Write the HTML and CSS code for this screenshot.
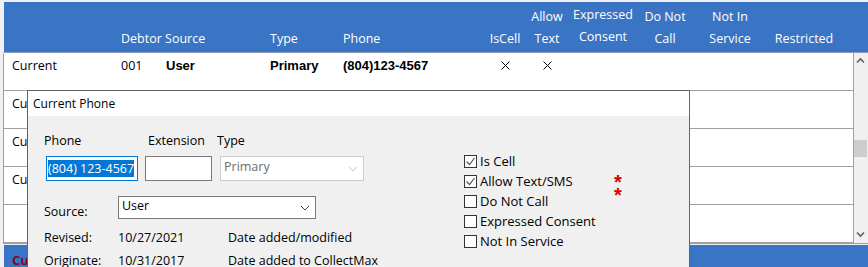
FILE: index.html
```html
<!DOCTYPE html>
<html lang="en">
<head>
    <meta charset="UTF-8">
    <meta name="viewport" content="width=device-width, initial-scale=1.0">
    <title>Phones</title>
    <link rel="stylesheet" href="styles.css">
</head>
<body>
    <div class="screen">
        <div class="grid">
            <div class="grid-head cols">
                <div class="hc"></div>
                <div class="hc">Debtor Source</div>
                <div class="hc"></div>
                <div class="hc">Type</div>
                <div class="hc">Phone</div>
                <div class="hc center">IsCell</div>
                <div class="hc center">Allow<br>Text</div>
                <div class="hc center consent">Expressed<br>Consent</div>
                <div class="hc center">Do Not<br>Call</div>
                <div class="hc center">Not In<br>Service</div>
                <div class="hc center">Restricted</div>
            </div>
            <div class="grid-main">
                <div class="grid-rows">
                    <div class="row cols">
                        <div class="cell name">Current</div>
                        <div class="cell">001</div>
                        <div class="cell bold">User</div>
                        <div class="cell bold">Primary</div>
                        <div class="cell bold">(804)123-4567</div>
                        <div class="cell center">
                            <svg class="mark" width="9" height="9" viewBox="0 0 9 9"><path d="M0.5 0.5 L8.5 8.5 M8.5 0.5 L0.5 8.5" stroke="#000" stroke-width="1"/></svg>
                        </div>
                        <div class="cell center">
                            <svg class="mark" width="9" height="9" viewBox="0 0 9 9"><path d="M0.5 0.5 L8.5 8.5 M8.5 0.5 L0.5 8.5" stroke="#000" stroke-width="1"/></svg>
                        </div>
                    </div>
                    <div class="row cols"><div class="cell name">Cu</div></div>
                    <div class="row cols"><div class="cell name">Cu</div></div>
                    <div class="row cols"><div class="cell name">Cu</div></div>
                    <div class="row cols"></div>
                </div>
                <div class="scrollbar">
                    <svg class="arrow" width="13" height="10" viewBox="0 0 13 10"><path d="M3 6.5 L6.5 3 L10 6.5" fill="none" stroke="#606060" stroke-width="1.6"/></svg>
                    <div class="thumb"></div>
                    <svg class="arrow down" width="13" height="10" viewBox="0 0 13 10"><path d="M3 3.5 L6.5 7 L10 3.5" fill="none" stroke="#606060" stroke-width="1.6"/></svg>
                </div>
            </div>
            <div class="grid-foot"><span>Cu</span></div>
        </div>

        <div class="dialog">
            <div class="dialog-title">Current Phone</div>
            <div class="dialog-body">
                <div class="form-left">
                    <div class="phone-grid">
                        <label class="lbl">Phone</label>
                        <label class="lbl ext">Extension</label>
                        <label class="lbl">Type</label>
                        <div class="input focused"><span class="sel">(804) 123-4567</span></div>
                        <div class="input"></div>
                        <div class="combo disabled">
                            <span>Primary</span>
                            <svg width="10" height="6" viewBox="0 0 10 6"><path d="M1 1 L5 5 L9 1" fill="none" stroke="#c4c4c4" stroke-width="1"/></svg>
                        </div>
                    </div>
                    <div class="source-row">
                        <span class="key">Source:</span>
                        <div class="combo source">
                            <span>User</span>
                            <svg width="10" height="6" viewBox="0 0 10 6"><path d="M1 1 L5 5 L9 1" fill="none" stroke="#444" stroke-width="1"/></svg>
                        </div>
                    </div>
                    <div class="info-row">
                        <span class="key">Revised:</span>
                        <span class="val">10/27/2021</span>
                        <span>Date added/modified</span>
                    </div>
                    <div class="info-row">
                        <span class="key">Originate:</span>
                        <span class="val">10/31/2017</span>
                        <span>Date added to CollectMax</span>
                    </div>
                </div>
                <div class="flags">
                    <div class="check">
                        <span class="box"><svg width="11" height="11" viewBox="0 0 11 11"><path d="M1.5 5.5 L4.5 8.5 L9.5 2" fill="none" stroke="#555" stroke-width="1.2"/></svg></span>
                        Is Cell
                    </div>
                    <div class="check">
                        <span class="box"><svg width="11" height="11" viewBox="0 0 11 11"><path d="M1.5 5.5 L4.5 8.5 L9.5 2" fill="none" stroke="#555" stroke-width="1.2"/></svg></span>
                        Allow Text/SMS
                    </div>
                    <div class="check"><span class="box"></span>Do Not Call</div>
                    <div class="check"><span class="box"></span>Expressed Consent</div>
                    <div class="check"><span class="box"></span>Not In Service</div>
                </div>
                <div class="stars">*<br>*</div>
            </div>
        </div>
    </div>
</body>
</html>
```

FILE: styles.css
```css
body {
    margin: 0;
    padding: 0;
    background-color: #F0F0F0;
    font-family: "Open Sans", Arial, sans-serif;
    font-size: 12px;
    color: #000000;
}
.screen {
    position: relative;
    width: 868px;
    height: 267px;
    overflow: hidden;
}
.grid {
    padding: 2px 0 0 3px;
}
.cols {
    display: grid;
    grid-template-columns: 117px 45px 104px 73px 139px 46px 38px 68px 62px 68px 80px 1fr;
}
.grid-head {
    margin-left: 1px;
    height: 51px;
    background-color: #3A74C4;
    border-bottom: 1px solid #8A9AB8;
    color: #FFFFFF;
    font-size: 12.5px;
    line-height: 22px;
    align-items: end;
    padding-bottom: 2px;
    box-sizing: border-box;
}
.hc {
    white-space: nowrap;
}
.hc.center {
    text-align: center;
}
.hc.consent {
    position: relative;
    top: -2px;
    left: 3px;
}
.grid-main {
    display: flex;
    border-left: 1px solid #A0A0A0;
    border-bottom: 1px solid #A0A0A0;
}
.grid-rows {
    width: 849px;
    background-color: #FFFFFF;
    border-right: 1px solid #A0A0A0;
}
.row {
    height: 38px;
    border-bottom: 1px solid #A0A0A0;
    padding-top: 5px;
    box-sizing: border-box;
    line-height: 16px;
    font-size: 12.5px;
}
.cell {
    white-space: nowrap;
}
.cell.name {
    padding-left: 8px;
}
.cell.bold {
    font-family: "Liberation Sans", Arial, sans-serif;
    font-weight: bold;
    font-size: 13px;
}
.cell.center {
    text-align: center;
}
.mark {
    display: inline-block;
    vertical-align: middle;
    margin-top: -3px;
}
.scrollbar {
    width: 13px;
    display: flex;
    flex-direction: column;
    align-items: center;
    background-color: #F0F0F0;
}
.arrow {
    margin-top: 3px;
}
.thumb {
    width: 13px;
    height: 17px;
    margin-top: 74px;
    background-color: #CDCDCD;
}
.arrow.down {
    margin-top: auto;
    margin-bottom: 4px;
}
.grid-foot {
    margin: 1px 0 0 1px;
    height: 30px;
    background-color: #3A74C4;
    padding: 7px 0 0 8px;
    box-sizing: border-box;
    line-height: 16px;
    color: #7A0A1E;
    font-weight: bold;
    font-size: 13px;
}
.dialog {
    position: absolute;
    left: 27px;
    top: 90px;
    width: 663px;
    height: 200px;
    border: 1px solid #646464;
    box-sizing: border-box;
    background-color: #F0F0F0;
}
.dialog-title {
    height: 25px;
    background-color: #FFFFFF;
    padding-left: 5px;
    line-height: 25px;
    font-size: 12px;
}
.dialog-body {
    display: flex;
    padding-left: 16px;
    font-size: 12.5px;
}
.form-left {
    width: 420px;
    padding-top: 17px;
}
.phone-grid {
    display: grid;
    grid-template-columns: 96px 67px 147px;
    column-gap: 5px;
    row-gap: 7px;
    line-height: 16px;
}
.phone-grid .combo {
    margin-left: 3px;
}
.lbl.ext {
    padding-left: 3px;
}
.input {
    height: 25px;
    border: 1px solid #7A7A7A;
    background-color: #FFFFFF;
    box-sizing: border-box;
}
.input.focused {
    width: 92px;
    margin-left: 2px;
    border-color: #0078D7;
    padding: 3px 0 0 1px;
}
.sel {
    display: inline-block;
    background-color: #0078D7;
    color: #FFFFFF;
    line-height: 17px;
    white-space: nowrap;
}
.combo {
    height: 25px;
    border: 1px solid #7A7A7A;
    background-color: #FFFFFF;
    box-sizing: border-box;
    display: flex;
    align-items: center;
    justify-content: space-between;
    padding: 0 5px 0 3px;
}
.combo span {
    margin-top: -4px;
}
.combo.disabled {
    border-color: #CCCCCC;
    color: #6D6D6D;
}
.source-row {
    display: flex;
    align-items: flex-end;
    margin-top: 15px;
}
.key {
    width: 74px;
}
.source-row .key {
    line-height: 16px;
    margin-bottom: -1px;
}
.combo.source {
    width: 198px;
    height: 23px;
}
.info-row {
    display: flex;
    line-height: 23px;
}
.info-row:nth-child(3) {
    margin-top: 7px;
}
.val {
    width: 110px;
}
.flags {
    width: 150px;
    padding-top: 35px;
}
.check {
    display: flex;
    align-items: center;
    height: 20px;
    gap: 3px;
    font-size: 13px;
}
.box {
    width: 13px;
    height: 13px;
    border: 1px solid #333333;
    box-sizing: border-box;
    background-color: #FFFFFF;
    display: flex;
    align-items: center;
    justify-content: center;
}
.stars {
    padding-top: 60px;
    color: #D40000;
    font-family: "Liberation Sans", Arial, sans-serif;
    font-weight: bold;
    font-size: 20px;
    line-height: 13px;
}
```
